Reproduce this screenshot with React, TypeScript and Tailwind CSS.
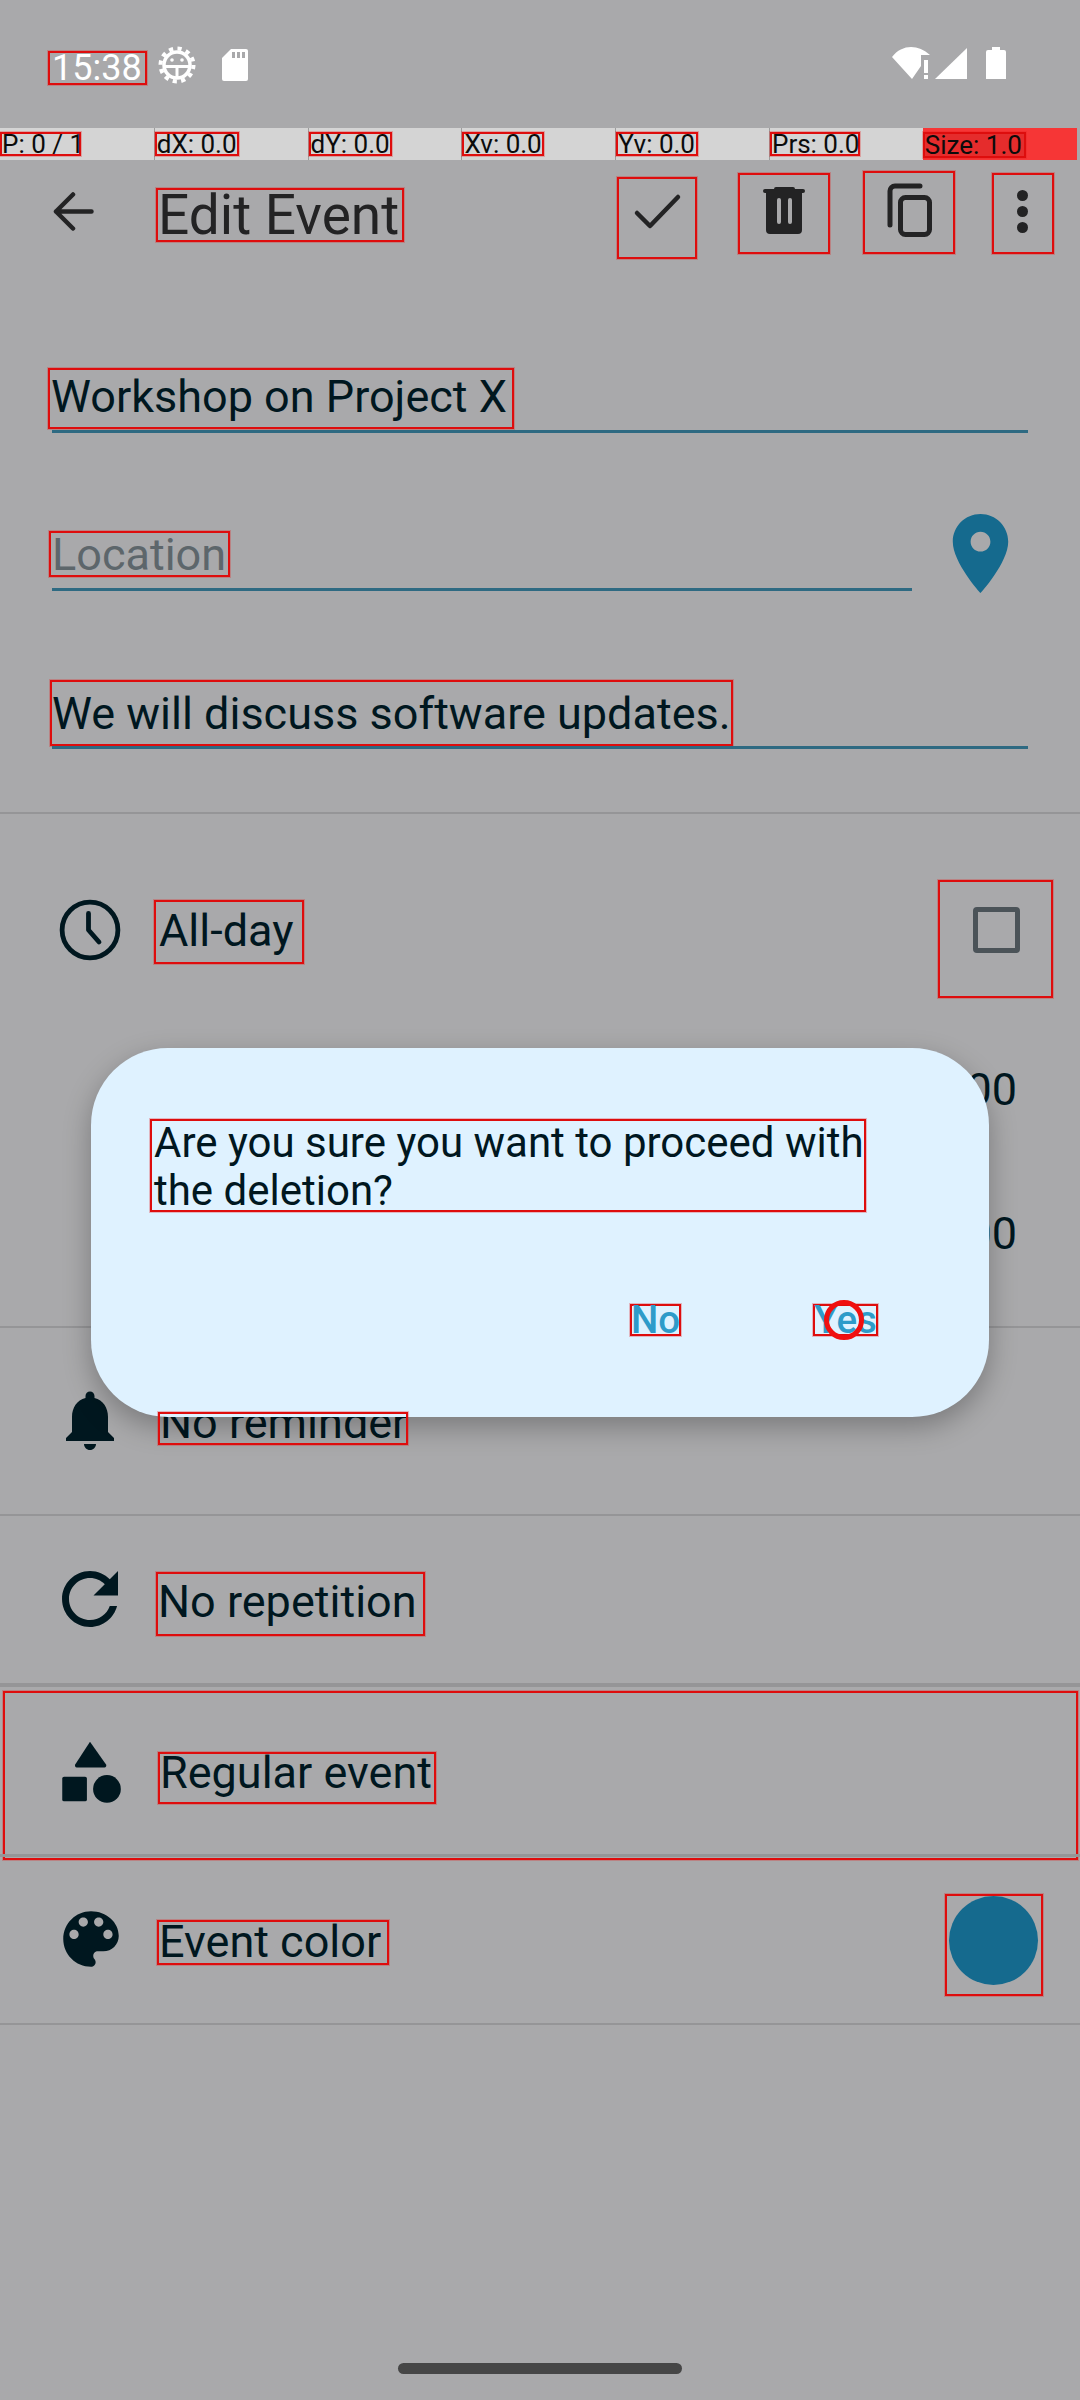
import React from 'react';

const BOX = 'border-2 border-[#de0d0d] shadow-[0_0_0_1px_rgba(230,30,30,0.28)]';
const INK = 'text-[#00171f]';

const debugCells = [
  { label: 'P: 0 / 1', box: 'w-[81px]' },
  { label: 'dX: 0.0', box: 'w-[84px]' },
  { label: 'dY: 0.0', box: 'w-[83px]' },
  { label: 'Xv: 0.0', box: 'w-[82px]' },
  { label: 'Yv: 0.0', box: 'w-[82px]' },
  { label: 'Prs: 0.0', box: 'w-[90px]' },
];

const StatusBar = () => (
  <div className="h-[128px] flex items-start text-white">
    <div className={`ml-[48px] mt-[51px] w-[99px] h-[34px] flex items-center pl-[2px] text-[36px] leading-none ${BOX}`}>15:38</div>
    <svg className="ml-[11px] mt-[46px] w-[38px] h-[38px]" viewBox="0 0 38 38" fill="none" stroke="#fff">
      <circle cx="19" cy="19" r="16.5" strokeWidth="4" strokeDasharray="4.2 4.44" />
      <circle cx="19" cy="19" r="13" strokeWidth="3.5" />
      <path d="M6 20.5H32M19 20.5V32" strokeWidth="3" />
      <circle cx="14" cy="14" r="1.8" fill="#fff" stroke="none" />
      <circle cx="24" cy="14" r="1.8" fill="#fff" stroke="none" />
    </svg>
    <svg className="ml-[26px] mt-[49px] w-[26px] h-[32px]" viewBox="0 0 26 32">
      <path d="M9 0H24a2 2 0 0 1 2 2V30a2 2 0 0 1-2 2H2a2 2 0 0 1-2-2V9Z" fill="#fff" />
      <path d="M10 3h3v6h-3zM15 3h3v6h-3zM20 3h3v6h-3z" fill="#a9a9ab" />
    </svg>
    <svg className="ml-[642px] mt-[46px] w-[42px] h-[34px]" viewBox="0 0 42 34" fill="#fff">
      <path d="M2 11C12 -2 28 -2 40 9H31V20L22 33Z" />
      <path d="M34 14h4v13h-4zM34 29h4v4h-4z" />
    </svg>
    <svg className="ml-[2px] mt-[47px] w-[34px] h-[33px]" viewBox="0 0 34 33" fill="#fff">
      <path d="M33 1V32H1Z" />
    </svg>
    <svg className="ml-[18px] mt-[47px] w-[20px] h-[32px]" viewBox="0 0 20 32" fill="#fff">
      <path d="M6 0H14V3H18a2 2 0 0 1 2 2V32H0V5a2 2 0 0 1 2-2H6Z" />
    </svg>
  </div>
);

const DebugBar = () => (
  <div className="h-[32px] flex bg-[#a9a9ab] text-[26px] leading-none text-[#0b0b0b]">
    {debugCells.map((cell, i) => (
      <div key={cell.label} className={`w-[153.8px] h-full bg-[#d4d4d4] ${i > 0 ? 'border-l border-[#9c9c9c]' : ''}`}>
        <div className={`${cell.box} h-[24px] mt-[4px] flex items-center whitespace-nowrap ${BOX}`}>{cell.label}</div>
      </div>
    ))}
    <div className="w-[153.8px] h-full bg-[#f63636]">
      <div className={`w-[103px] h-[26px] mt-[4px] flex items-center bg-[#e52c2c] whitespace-nowrap ${BOX}`}>Size: 1.0</div>
    </div>
  </div>
);

const AppBar = () => (
  <div className="h-[140px] flex items-start">
    <svg className="ml-[53px] mt-[32px] w-[41px] h-[39px]" viewBox="0 0 41 39" fill="none" stroke="#232324" strokeWidth="4.5" strokeLinecap="round" strokeLinejoin="round">
      <path d="M20 2.5L3 19.5L20 36.5M3 19.5H38.5" />
    </svg>
    <div className={`ml-[62px] mt-[28px] w-[248px] h-[54px] flex items-center text-[55px] leading-none text-[#232324] whitespace-nowrap ${BOX}`}>Edit Event</div>
    <div className={`ml-[213px] mt-[17px] w-[80px] h-[82px] ${BOX}`}>
      <svg className="w-full h-full" viewBox="0 0 76 78" fill="none" stroke="#232324" strokeWidth="4.5" strokeLinecap="round" strokeLinejoin="round">
        <path d="M18 34L31 47L59 18" />
      </svg>
    </div>
    <div className={`ml-[41px] mt-[13px] w-[92px] h-[81px] ${BOX}`}>
      <svg className="w-full h-full" viewBox="0 0 88 77" fill="#232324">
        <path d="M36 12h17a2 2 0 0 1 2 2H63a2 2 0 0 1 0 4H62V55a4 4 0 0 1-4 4H30a4 4 0 0 1-4-4V18H25a2 2 0 0 1 0-4H34a2 2 0 0 1 2-2Z" />
        <rect x="37" y="23" width="4" height="26" rx="2" fill="#a9a9ab" />
        <rect x="48" y="23" width="4" height="26" rx="2" fill="#a9a9ab" />
      </svg>
    </div>
    <div className={`ml-[33px] mt-[11px] w-[92px] h-[83px] ${BOX}`}>
      <svg className="w-full h-full" viewBox="0 0 88 79" fill="none" stroke="#232324" strokeWidth="5" strokeLinecap="round">
        <path d="M25 52V18a5 5 0 0 1 5-5H55" />
        <rect x="35.5" y="24.5" width="29" height="37" rx="5" />
      </svg>
    </div>
    <div className={`ml-[37px] mt-[13px] w-[62px] h-[81px] ${BOX}`}>
      <svg className="w-full h-full" viewBox="0 0 58 77" fill="#232324">
        <circle cx="28.5" cy="20.5" r="5.5" />
        <circle cx="28.5" cy="36.5" r="5.5" />
        <circle cx="28.5" cy="52.5" r="5.5" />
      </svg>
    </div>
  </div>
);

const Form = () => (
  <div className={`${INK} text-[45px] leading-none`}>
    <div className={`ml-[48px] mt-[68px] w-[466px] h-[61px] flex items-center pl-[1px] pb-[4px] whitespace-nowrap ${BOX}`}>Workshop on Project X</div>
    <div className="ml-[52px] mt-[1px] w-[976px] h-[3px] bg-[#2e6a82]" />
    <div className="mt-[73px] h-[95px] flex items-start">
      <div className="w-[933px] pl-[49px]">
        <div className={`mt-[25px] w-[181px] h-[46px] flex items-center pl-[1px] text-[#5d666b] ${BOX}`}>Location</div>
        <div className="ml-[3px] mt-[11px] w-[860px] h-[3px] bg-[#2e6a82]" />
      </div>
      <svg className="w-[95px] h-[95px]" viewBox="0 0 24 24" fill="#156a8e">
        <path d="M12 2C8.13 2 5 5.13 5 9c0 5.25 7 13 7 13s7-7.75 7-13c0-3.87-3.13-7-7-7zm0 9.5c-1.38 0-2.5-1.12-2.5-2.5s1.12-2.5 2.5-2.5 2.5 1.12 2.5 2.5-1.12 2.5-2.5 2.5z" />
      </svg>
    </div>
    <div className={`ml-[50px] mt-[79px] w-[683px] h-[66px] flex items-center whitespace-nowrap ${BOX}`}>We will discuss software updates.</div>
    <div className="ml-[52px] w-[976px] h-[3px] bg-[#2e6a82]" />
    <div className="mt-[63px] h-[2px] bg-[#959597]" />
  </div>
);

const ScheduleRows = () => (
  <div className={`${INK} text-[45px] leading-none`}>
    <div className="mt-[66px] h-[118px] flex items-start">
      <svg className="ml-[54px] mt-[14px] w-[72px] h-[72px]" viewBox="0 0 24 24" fill="none" stroke="#00171f" strokeWidth="1.6" strokeLinecap="round" strokeLinejoin="round">
        <circle cx="12" cy="12" r="9.3" />
        <path d="M11.5 6.5V12L15 16" />
      </svg>
      <div className={`ml-[28px] mt-[20px] w-[150px] h-[64px] flex items-center pl-[3px] pb-[3px] ${BOX}`}>All-day</div>
      <div className={`ml-[634px] w-[115px] h-[118px] pl-[33px] pt-[25px] ${BOX}`}>
        <div className="w-[47px] h-[46px] border-[5px] border-[#4b5358] rounded-[4px]" />
      </div>
    </div>
    <div className="pr-[63px] text-right h-[144px] pt-[69px]">15:00</div>
    <div className="pr-[63px] text-right h-[184px] pt-[69px]">16:00</div>
    <div className="h-[2px] bg-[#959597]" />
  </div>
);

const OptionRows = () => (
  <div className={`${INK} text-[45px] leading-none`}>
    <div className="h-[186px] flex items-start">
      <svg className="ml-[54px] mt-[56px] w-[72px] h-[72px]" viewBox="0 0 24 24" fill="#00171f">
        <path d="M12 22c1.1 0 2-.9 2-2h-4c0 1.1.9 2 2 2zm6-6v-5c0-3.07-1.63-5.64-4.5-6.32V4c0-.83-.67-1.5-1.5-1.5s-1.5.67-1.5 1.5v.68C7.64 5.36 6 7.92 6 11v5l-2 2v1h16v-1l-2-2z" />
      </svg>
      <div className="ml-[34px] mt-[74px] h-[40px] flex items-center whitespace-nowrap">No reminder</div>
    </div>
    <div className="h-[2px] bg-[#959597]" />
    <div className="h-[167px] flex items-start">
      <svg className="ml-[48px] mt-[41px] w-[84px] h-[84px]" viewBox="0 0 24 24" fill="#00171f">
        <path d="M17.65 6.35C16.2 4.9 14.21 4 12 4c-4.42 0-7.99 3.58-7.99 8s3.57 8 7.99 8c3.73 0 6.84-2.55 7.73-6h-2.08c-.82 2.33-3.04 4-5.65 4-3.31 0-6-2.69-6-6s2.69-6 6-6c1.66 0 3.14.69 4.22 1.78L13 11h7V4l-2.35 2.35z" />
      </svg>
      <div className={`ml-[24px] mt-[56px] w-[269px] h-[64px] flex items-center pb-[6px] whitespace-nowrap ${BOX}`}>No repetition</div>
    </div>
    <div className="h-[4px] bg-[#959597]" />
    <div className={`mt-[4px] ml-[3px] w-[1075px] h-[169px] ${BOX}`}>
      <div className="h-[161px] flex items-start">
        <svg className="ml-[48px] mt-[42px] w-[74px] h-[74px]" viewBox="0 0 24 24" fill="#00171f">
          <path d="M12 2.2l-4.8 7.4a.6.6 0 0 0 .5.9h9a.6.6 0 0 0 .5-.9z" />
          <rect x="3" y="13.5" width="8" height="8" rx="0.6" />
          <circle cx="17.5" cy="17.5" r="4.5" />
        </svg>
        <div className={`ml-[31px] mt-[59px] w-[278px] h-[52px] flex items-center pb-[12px] whitespace-nowrap ${BOX}`}>Regular event</div>
      </div>
      <div className="-mx-[5px] h-[3px] bg-[#959597]" />
    </div>
    <div className="h-[163px] flex items-start">
      <svg className="ml-[54px] mt-[42px] w-[74px] h-[74px]" viewBox="0 0 24 24" fill="#00171f">
        <path d="M12 3c-4.97 0-9 4.03-9 9s4.03 9 9 9c.83 0 1.5-.67 1.5-1.5 0-.39-.15-.74-.39-1.01-.23-.26-.38-.61-.38-.99 0-.83.67-1.5 1.5-1.5H16c2.76 0 5-2.24 5-5 0-4.42-4.03-8-9-8zm-5.5 9c-.83 0-1.5-.67-1.5-1.5S5.67 9 6.5 9 8 9.67 8 10.5 7.33 12 6.5 12zm3-4C8.67 8 8 7.33 8 6.5S8.67 5 9.5 5s1.5.67 1.5 1.5S10.33 8 9.5 8zm5 0c-.83 0-1.5-.67-1.5-1.5S13.67 5 14.5 5s1.5.67 1.5 1.5S15.33 8 14.5 8zm3 4c-.83 0-1.5-.67-1.5-1.5S16.67 9 17.5 9s1.5.67 1.5 1.5-.67 1.5-1.5 1.5z" />
      </svg>
      <div className={`ml-[29px] mt-[60px] w-[232px] h-[45px] flex items-center pb-[2px] whitespace-nowrap ${BOX}`}>Event color</div>
      <div className={`ml-[556px] mt-[34px] w-[98px] h-[102px] pl-[2px] ${BOX}`}>
        <div className="w-[89px] h-[89px] rounded-full bg-[#156a8e]" />
      </div>
    </div>
    <div className="h-[2px] bg-[#959597]" />
  </div>
);

const ConfirmDialog = () => (
  <div className="absolute left-[91px] top-[1048px] w-[898px] h-[369px] rounded-[77px] bg-[#dff2ff] shadow-[0_10px_28px_rgba(0,0,0,0.28)]">
    <div className={`ml-[59px] mt-[71px] w-[716px] h-[93px] pl-[2px] text-[42px] leading-[48px] ${INK} ${BOX}`}>
      <p className="-mt-[2px]">Are you sure you want to proceed with the deletion?</p>
    </div>
    <div className="mt-[92px] flex text-[#2e9bc9] text-[38.5px] font-medium leading-none">
      <div className={`ml-[539px] w-[51px] h-[32px] flex items-center justify-center ${BOX}`}>No</div>
      <div className={`ml-[132px] w-[65px] h-[32px] flex items-center justify-center ${BOX}`}>Yes</div>
    </div>
  </div>
);

export default function App() {
  return (
    <div className="relative w-[1080px] h-[2400px] overflow-hidden bg-[#a9a9ab] font-[Roboto,sans-serif]">
      <StatusBar />
      <DebugBar />
      <AppBar />
      <Form />
      <ScheduleRows />
      <OptionRows />
      <div className="mt-[338px] mx-auto w-[284px] h-[11px] rounded-full bg-[#464646]" />
      <ConfirmDialog />
      {/* the bounds of this label sit on top of the dialog */}
      <div className={`absolute left-[158px] top-[1412px] w-[250px] h-[33px] ${BOX}`} />
      <div className="absolute left-[824px] top-[1300px] w-[40px] h-[40px] rounded-full border-[5px] border-[#f01010]" />
    </div>
  );
}
